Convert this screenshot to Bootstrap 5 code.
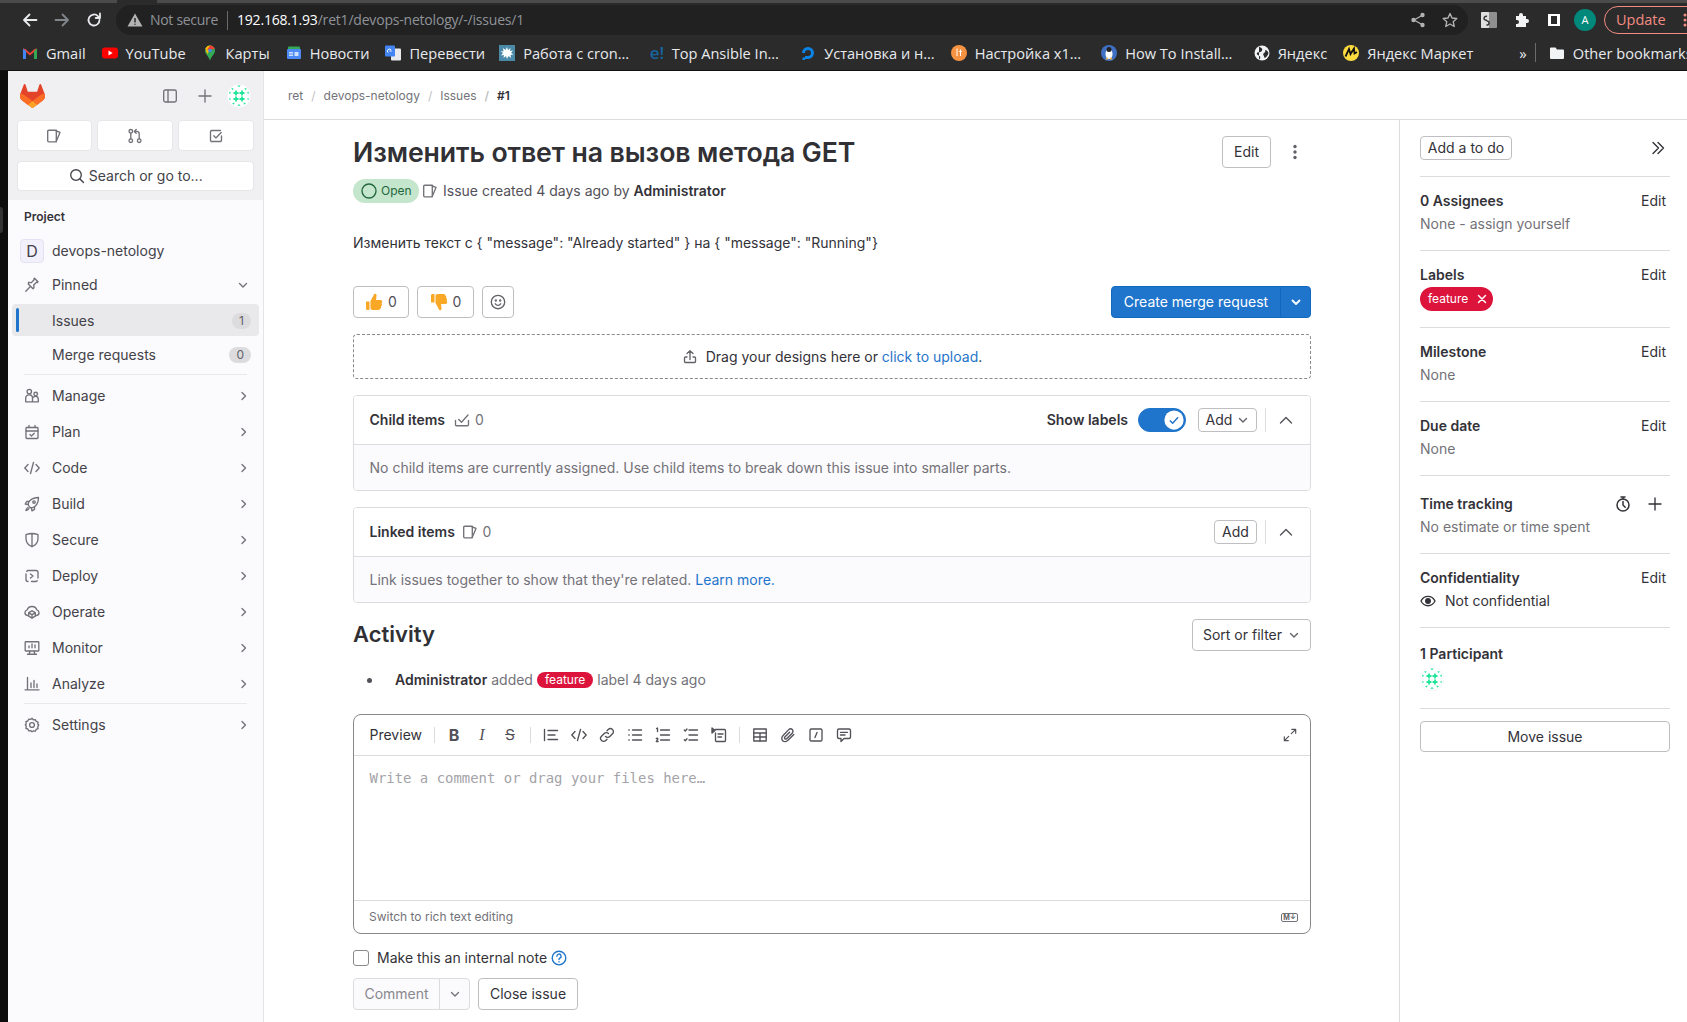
<!doctype html>
<html lang="en">
<head>
<meta charset="utf-8">
<title>Issue #1</title>
<link href="https://cdn.jsdelivr.net/npm/bootstrap@5.3.0/dist/css/bootstrap.min.css" rel="stylesheet">
<style>
html,body{height:1022px;overflow:hidden}
body{font-family:Inter,"Noto Sans",sans-serif;font-size:14px;line-height:20px;color:#333238;background:#fff}
.ic{width:16px;height:16px;fill:none;stroke:currentColor;stroke-width:1.35;stroke-linecap:round;stroke-linejoin:round;flex:none}
.fav{width:16px;height:16px;flex:none}
/* browser */
.br-top{height:71px;background:#2b2b2c;color:#e8eaed;font-family:"Open Sans","Noto Sans",sans-serif;border-bottom:1px solid #111}
.br-strip{height:3px;background:#4b4b4b}
.br-strip i{display:block;width:40px;height:3px;margin-left:117px;background:#2b2b2c}
.br-tools{height:34px;position:relative;padding-left:14px}
.br-btn{width:32px;justify-content:center;color:#e8eaed}
.omni{height:30px;width:1352px;margin-left:6px;background:#212122;border-radius:15px;padding-left:11px;font-size:14px}
.omni .warn{color:#b3b3b3}
.omni .ns{color:#8f9398;margin-left:7px;letter-spacing:-.3px}
.omni .sep{width:1px;height:19px;background:#6b6b6b;margin:0 9px}
.omni .host{color:#fff;letter-spacing:-.2px}
.omni .path{color:#8f9398;letter-spacing:-.2px}
.avatar-a{width:22px;height:22px;border-radius:50%;background:#00897b;color:#fff;font-size:11px;justify-content:center}
.upd{height:28px;width:120px;margin-left:8px;border:1px solid #f28b82;border-radius:14px;color:#f28b82;padding-left:11px;font-size:14.5px;flex:none;margin-right:-40px}
.bm-row{height:31px;padding-left:22px;font-size:14.6px;white-space:nowrap;color:#e8eaed;overflow:hidden}
.bm{gap:8px;margin-right:16px;flex:none}
.bm-f{width:150.5px;margin-right:0}
.bm-first{margin-left:-2px}
.bm-after{margin-left:2px}
.fav-e{width:14px;color:#1565a0;font-size:17px;line-height:16px;font-weight:600}
/* app */
.app{height:951px}
.edge{width:8px;background:#0d0d0d;flex:none;padding-top:136px}
.edge i{display:block;width:3px;height:26px;background:#333;border-radius:0 5px 5px 0}
.side{width:256px;flex:none;background:#fbfafd;border-right:1px solid #e4e4e7;color:#434248}
.side-top{height:129px;background:#f0f0f2;padding:13px 9px 0 8.5px}
.side-r1{height:24px;color:#737278}
.logo{width:25px;height:24px;margin-left:3px}
.side-tabs{gap:5px;margin-top:12px}
.side-tab{flex:1;height:31px;background:#fff;border:1px solid #e7e7ea;border-radius:4px;padding:0;color:#737278;font-size:14px}
.side-search{width:100%;height:30px;margin-top:10px;background:#fff;border:1px solid #e7e7ea;border-radius:4px;color:#434248;gap:4px;padding:0 0 1px 1px;font-size:14px}
.side-head{height:34px;padding-left:16px;font-size:12px;font-weight:600;color:#333238}
.s-item{height:36px;margin:0 4px;padding:0 12px;gap:12px;color:#434248;border-radius:4px;position:relative;text-decoration:none}
.s-item .ic{color:#737278}
.s-item .chev{margin-left:auto;width:12px;height:12px;margin-right:-3px;color:#737278}
.s-item .chev-d{margin-right:-2px}
.s-h34{height:34px}
.s-project{padding-left:8px;gap:8px}
.proj-box{width:24px;height:24px;background:#f1f0fb;border:1px solid #e3e2f2;border-radius:4px;justify-content:center;font-size:16px}
.s-sub{height:32px;padding-left:40px}
.s-act{background:#e9e9eb;margin-top:2px;padding-top:1px}
.s-act::before{content:"";position:absolute;left:4px;top:4px;bottom:4px;width:3px;border-radius:2px;background:#1f75cb}
.s-cnt{margin-left:auto;background:#dcdcde;color:#626168;font-weight:400;font-size:12px;line-height:1;padding:2px 7px;border-radius:8px;margin-right:-4px}
.s-rule{height:1px;background:#e9e9eb;margin:0 16px}
.rs-mid{margin-top:3px}
/* main */
.crumbs{height:49px;border-bottom:1px solid #dcdcde;padding:1px 0 0 24px;flex:none}
.crumbs .breadcrumb{font-size:12px;--bs-breadcrumb-margin-bottom:0;--bs-breadcrumb-divider-color:#bfbfc3;--bs-breadcrumb-item-active-color:#333238}
.crumbs a{color:#737278;text-decoration:none}
.crumbs .active{font-weight:600}
.col-main{width:1135px;flex:none;padding:16px 88px 0 89px}
.col-right{flex:1;border-left:1px solid #dcdcde;padding:0 17px 0 20px;height:902px}
.gbtn{--bs-btn-padding-y:0;--bs-btn-padding-x:12px;--bs-btn-font-size:14px;--bs-btn-line-height:20px;--bs-btn-color:#333238;--bs-btn-bg:#fff;--bs-btn-border-color:#bfbfc3;--bs-btn-border-radius:4px;--bs-btn-hover-bg:#fff;--bs-btn-hover-color:#333238;--bs-btn-hover-border-color:#bfbfc3;height:32px;display:inline-flex;align-items:center;justify-content:center;white-space:nowrap}
.gbtn-sm{--bs-btn-padding-x:7px;height:24px}
.issue-title{font-size:26.7px;line-height:32px;font-weight:600;margin:0;color:#303035;letter-spacing:-.1px}
.st-open{height:24px;width:66px;background:#c3e6cd;color:#24663b;border-radius:12px;font-size:12px;font-weight:400;padding:0 0 0 8px;gap:4px;line-height:1}
.meta{margin-top:11px;gap:6px;color:#535158}
.meta b{font-weight:600;color:#333238}
.descr{margin-top:30px;color:#333238}
.awards{margin-top:33px;gap:8px}
.cnt-txt{margin-left:5px;color:#535158}
.mr-btn{--bs-btn-color:#fff;--bs-btn-bg:#1f75cb;--bs-btn-border-color:#1068bf;--bs-btn-hover-bg:#1f75cb;--bs-btn-hover-color:#fff;--bs-btn-hover-border-color:#1068bf}
.dropzone{margin-top:16px;height:45px;border:1px dashed #89888d;border-radius:4px;gap:8px;color:#333238}
.dropzone a,.link-blue{color:#1f75cb;text-decoration:none}
.wcard{margin-top:16px;height:96px;--bs-card-border-color:#dcdcde;--bs-card-border-radius:4px;--bs-card-inner-border-radius:3px}
.wcard .card-header{height:49px;background:#fff;padding:0 8px 0 15.5px;border-bottom:1px solid #dcdcde;flex:none}
.wcard .card-body{background:#fbfafd;padding:13px 15.5px 12px;color:#737278;border-radius:0 0 3px 3px;flex:none}
.wc-title{font-weight:600}
.wc-count{color:#737278;gap:5px;margin-left:9px}
.vr-line{width:1px;height:24px;background:#dcdcde;margin:0 4px 0 8px}
.up-chev{width:32px;height:32px;color:#535158;padding:0;border:0;background:none;justify-content:center}
.sw-lab{font-weight:600;margin-right:10px}
.sw-wrap{padding:0;margin:0 12px 0 0;min-height:0;height:24px}
.form-switch .sw-input,.form-switch .sw-input:checked{width:48px;height:24px;margin:0;float:none;border-radius:12px;background-color:#1f75cb;border-color:#1f75cb;background-position:right center;background-size:auto 100%;background-image:url("data:image/svg+xml,%3Csvg xmlns='http://www.w3.org/2000/svg' viewBox='0 0 24 24'%3E%3Ccircle cx='12' cy='12' r='10.5' fill='%23fff'/%3E%3Cpath d='M7.5 12.5l3 3 6-6.500' fill='none' stroke='%231f75cb' stroke-width='1.6'/%3E%3C/svg%3E")}
.act-head{margin-top:16px;height:32px}
.act-title{font-size:22px;line-height:30px;padding-bottom:2px;font-weight:600;margin:0;color:#303035}
.act-row{margin-top:19px;color:#737278;padding-left:14px}
.act-row i{width:5px;height:5px;border-radius:50%;background:#535158;margin-right:23px}
.act-row b{font-weight:600;color:#333238;margin-right:4px}
.lab-in{background:#dc143c;color:#fff;font-size:12px;line-height:16px;height:16px;font-weight:400;padding:0 8px;border-radius:8px;margin:0 4px;display:inline-block}
.editor{margin-top:24px;height:220px;border:1px solid #89888d;border-radius:8px}
.ed-bar{height:41px;padding:0 11px 0 15.5px;border-bottom:1px solid #dcdcde}
.ed-bar .sepv{width:1px;height:16px;background:#dcdcde}
.ed-t{width:28px;height:28px;justify-content:center;color:#535158}
.ed-l{font-weight:700;font-size:16px;line-height:1}
.ed-i{font:italic 16px "Liberation Serif",serif}
.ed-s{font-size:15px}
.ed-area{flex:1;padding:12px 15.5px;font-family:"DejaVu Sans Mono",monospace;font-size:13.95px;color:#a4a3a8}
.ed-foot{height:33px;padding:0 11px 0 15px;border-top:1px solid #dcdcde;font-size:12px;color:#737278}
.md-ic{border:1px solid #737278;border-radius:2px;font-size:7px;line-height:7px;padding:0 1px;color:#626168;font-weight:700}
.note-row{margin-top:14px;height:20px;gap:8px}
.note-row .form-check-input{width:16px;height:16px;margin:0;border-radius:3px;border-color:#89888d}
.foot-btns{margin-top:10px;gap:8px}
.gbtn-dis{--bs-btn-color:#89888d;--bs-btn-bg:#fbfafd;--bs-btn-border-color:#dcdcde;--bs-btn-hover-bg:#fbfafd;--bs-btn-hover-color:#89888d;--bs-btn-hover-border-color:#dcdcde}
/* sidebar right */
.rs{border-bottom:1px solid #dcdcde;padding:14px 0 16px}
.rs-t{height:20px;font-weight:600;color:#333238}
.rs-t span.ed{font-weight:400;margin-left:auto;margin-right:4px;color:#333238}
.rs-v{margin-top:3px;height:20px;color:#737278}
.rs-top{padding:16px 0}
.lab-chip{height:24px;width:73px;margin-top:2px;padding:0 0 0 8px;background:#dc143c;color:#fff;border-radius:12px;font-size:12px;font-weight:400;gap:8px}
.rs-move{margin-top:12px;height:31px;width:100%}
.part-av{width:24px;height:24px;margin-top:3px;margin-bottom:1px}
</style>
</head>
<body>
<svg class="d-none" xmlns="http://www.w3.org/2000/svg">
 <symbol id="i-issue" viewBox="0 0 16 16"><path d="M1.700 3.200a1 1 0 0 1 1-1h7.600v11.600H2.700a1 1 0 0 1-1-1z"/><path d="M10.300 3l3.700 1.400-3.700 8.800"/></symbol>
 <symbol id="i-mr" viewBox="0 0 16 16"><circle cx="3.800" cy="3.300" r="1.800"/><circle cx="3.800" cy="12.700" r="1.800"/><circle cx="12.200" cy="12.700" r="1.800"/><path d="M3.800 5.100v5.800M12.200 10.900V6a2.600 2.600 0 0 0-2.600-2.600H7.500M9.200 1.500L7.300 3.400l1.900 1.900"/></symbol>
 <symbol id="i-todo" viewBox="0 0 16 16"><path d="M13.500 8v4.300a1.200 1.200 0 0 1-1.200 1.200H3.700a1.200 1.200 0 0 1-1.200-1.200V3.700a1.200 1.200 0 0 1 1.200-1.200h8.800"/><path d="M5.800 7.800l2.100 2.100 5.300-5.300"/></symbol>
 <symbol id="i-search" viewBox="0 0 16 16"><circle cx="7" cy="7" r="5.300"/><path d="M11 11l3.500 3.500"/></symbol>
 <symbol id="i-panel" viewBox="0 0 16 16"><rect x="1.700" y="2" width="12.600" height="12" rx="1.700"/><path d="M6 2v12"/></symbol>
 <symbol id="i-plus" viewBox="0 0 16 16"><path d="M8 2v12M2 8h12"/></symbol>
 <symbol id="i-chev-r" viewBox="0 0 12 12"><path d="M4 2.500L7.500 6 4 9.500"/></symbol>
 <symbol id="i-chev-d" viewBox="0 0 12 12"><path d="M2.500 4.500L6 8l3.500-3.500"/></symbol>
 <symbol id="i-chev-u" viewBox="0 0 16 16"><path d="M2.500 11L8 5.500l5.500 5.500"/></symbol>
 <symbol id="i-pin" viewBox="0 0 16 16"><path d="M1.800 14.200l4.100-4.100M4.300 7l4.700 4.700 1-1-.3-2.800 2.800-2.700.9.300.6-.7-3.500-3.500-.7.600.3.900-2.700 2.800-2.800-.3z"/></symbol>
 <symbol id="i-manage" viewBox="0 0 16 16"><circle cx="5.300" cy="3.600" r="2.200"/><circle cx="11.700" cy="6" r="1.800"/><path d="M1.700 13.800V10a3.200 3.200 0 0 1 3.200-3.200h.6A3 3 0 0 1 8.500 10v3.800zM8.500 13.800h5.800v-2.600a2.800 2.800 0 0 0-2.800-2.800 3 3 0 0 0-2.300 1"/></symbol>
 <symbol id="i-plan" viewBox="0 0 16 16"><rect x="2" y="3.500" width="12" height="11" rx=".8"/><path d="M2 7h12M5 1.500v2M11 1.500v2M6 10.500l1.500 1.500L10.200 9.300"/></symbol>
 <symbol id="i-code" viewBox="0 0 16 16"><path d="M4 4.500L.8 8 4 11.500M12 4.500L15.200 8 12 11.500M9.500 2.500l-3 11"/></symbol>
 <symbol id="i-build" viewBox="0 0 16 16"><path d="M5.500 11c-1-1-1.500-2.200-1.200-3.600C5 4 9.500 1.300 14.500 1.500c.2 5-2.500 9.500-5.900 10.200-1.400.3-2.300-.1-3.100-.7z"/><path d="M4.500 5.500H2.700L1.200 8l3 .7M10.500 11.500v1.800L8 14.800l-.7-3"/><circle cx="10" cy="6" r="1.200"/><path d="M4 11.500c-1 .5-1.700 1.500-2 3 1.500-.3 2.500-1 3-2"/></symbol>
 <symbol id="i-secure" viewBox="0 0 16 16"><path d="M8 14.700C4.500 13.300 2 10.700 2 6.500V2.700C3.800 2 5.800 1.500 8 1.500s4.200.5 6 1.200v3.800c0 4.200-2.500 6.800-6 8.200zM8 1.500v13.200"/></symbol>
 <symbol id="i-deploy" viewBox="0 0 16 16"><path d="M4 13.500A2 2 0 0 1 2 11.500V6M2.700 3.300A2 2 0 0 1 4 2.500h8a2 2 0 0 1 2 2v5.500M13.300 12.700a2 2 0 0 1-1.300.8H7.500"/><path d="M6.500 6l2.500 2-2.500 2"/></symbol>
 <symbol id="i-operate" viewBox="0 0 16 16"><path d="M4 11.500H3.500A2.800 2.800 0 0 1 1 8.500c0-1.400.9-2.300 2.200-2.600C3.800 3.700 5.700 2.500 8 2.500s4.200 1.200 4.800 3.400C14.100 6.200 15 7.100 15 8.500a2.800 2.800 0 0 1-2.500 3H12"/><path d="M8 6.800l3.300 1.900v3.500L8 14.200l-3.300-2V8.700zM4.700 8.800L8 10.700l3.300-1.900M8 10.700v3.500"/></symbol>
 <symbol id="i-monitor" viewBox="0 0 16 16"><rect x="1.200" y="1.700" width="13.600" height="9.300" rx=".6"/><path d="M5 7.800V6M8 7.800V4M11 7.800V5M6 11l-.8 3M10 11l.8 3M3.500 14.200h9"/></symbol>
 <symbol id="i-analyze" viewBox="0 0 16 16"><path d="M3.500 1.500v12.300M1 13.800h14M7 11.500V7M10 11.500V4.500M13 11.500V8"/></symbol>
 <symbol id="i-gear" viewBox="0 0 16 16"><path d="M8 1.300l1.300 1.500 2-.2.9 1.800 1.900.7-.4 2 1 1-1 1.700.4 1.900-1.900.7-.9 1.800-2-.2L8 14.700l-1.300-1.100-2 .2-.9-1.800-1.900-.7.4-1.900-1-1.700 1-1-.4-2 1.900-.7.9-1.800 2 .2z"/><circle cx="8" cy="8" r="2.400"/></symbol>
 <symbol id="i-upload" viewBox="0 0 16 16"><path d="M8 10.500V2M5 4.500L8 1.800l3 2.700M5 8H3.500a1 1 0 0 0-1 1v3.500a1 1 0 0 0 1 1h9a1 1 0 0 0 1-1V9a1 1 0 0 0-1-1H11"/></symbol>
 <symbol id="i-smile" viewBox="0 0 16 16"><circle cx="8" cy="8" r="6.700"/><circle cx="5.800" cy="6.500" r=".5"/><circle cx="10.200" cy="6.500" r=".5"/><path d="M5.300 9.800c.7 1 1.600 1.500 2.700 1.500s2-.5 2.700-1.500"/></symbol>
 <symbol id="i-child" viewBox="0 0 16 16"><path d="M1.500 8.500v4.200a1 1 0 0 0 1 1h11a1 1 0 0 0 1-1V8.500"/><path d="M4.700 7.500l2.800 2.800L14 3"/></symbol>
 <symbol id="i-expand" viewBox="0 0 16 16"><path d="M9.500 6.500L14.500 1.500M10 1.500h4.500V6M6.500 9.500l-5 5M6 14.500H1.500V10"/></symbol>
 <symbol id="i-dchev" viewBox="0 0 16 16"><path d="M3 2.500L8.500 8 3 13.500M8 2.500L13.500 8 8 13.500"/></symbol>
 <symbol id="i-quote" viewBox="0 0 16 16"><path d="M1.500 2.500v11M5 3.500h9.500M5 8h7M5 12.500h9.500"/></symbol>
 <symbol id="i-link" viewBox="0 0 16 16"><path d="M6.500 9.500a3 3 0 0 0 4.300 0l2.700-2.700a3 3 0 0 0-4.300-4.300L8 3.700M9.500 6.500a3 3 0 0 0-4.300 0L2.500 9.200a3 3 0 0 0 4.300 4.300L8 12.300"/></symbol>
 <symbol id="i-bul" viewBox="0 0 16 16"><path d="M5.500 3h9M5.500 8h9M5.500 13h9M1.800 3h.4M1.800 8h.4M1.800 13h.4"/></symbol>
 <symbol id="i-num" viewBox="0 0 16 16"><path d="M5.500 3h9M5.500 8h9M5.500 13h9M1.500 1.500l1-.5v3.500M1.300 11.500c.6-.6 1.700-.3 1.500.6L1.300 14.500h1.800"/></symbol>
 <symbol id="i-task" viewBox="0 0 16 16"><path d="M6 3h8.500M6 8h8.500M6 13h8.500M1.300 3l1 1 1.700-2M1.300 12.800l1 1 1.700-2"/></symbol>
 <symbol id="i-coll" viewBox="0 0 16 16"><path d="M4 2.500h9.500a1 1 0 0 1 1 1v10a1 1 0 0 1-1 1h-8a1 1 0 0 1-1-1V6M7 7h5M7 10h3.500"/><path d="M1 1l3 2.500L1 6z" fill="currentColor"/></symbol>
 <symbol id="i-table" viewBox="0 0 16 16"><rect x="1.800" y="2" width="12.400" height="12"/><path d="M1.800 6h12.400M1.800 10h12.400M8 6v8"/></symbol>
 <symbol id="i-clip" viewBox="0 0 16 16"><path d="M13.800 7.500L8 13.300c-1.600 1.600-4 1.700-5.300.4s-1.200-3.700.4-5.300l5.400-5.500c1.200-1.200 2.900-1.200 3.800-.3s.9 2.600-.3 3.800L6.900 11.500c-.6.600-1.500.7-2 .2s-.4-1.400.2-2l4.500-4.500"/></symbol>
 <symbol id="i-slash" viewBox="0 0 16 16"><rect x="2" y="2" width="12" height="12" rx="1.300"/><path d="M9 5.500L7 10.500"/></symbol>
 <symbol id="i-cmt" viewBox="0 0 16 16"><path d="M3 2h10a1.500 1.500 0 0 1 1.500 1.500v6.500A1.500 1.500 0 0 1 13 11.500H8l-3 3V11.500H3A1.500 1.500 0 0 1 1.500 10V3.500A1.500 1.500 0 0 1 3 2zM4.500 5.300h7M4.500 8h4.500"/></symbol>
 <symbol id="i-timer" viewBox="0 0 16 16"><circle cx="8" cy="9" r="6"/><path d="M6 1h4M8 1v2M8 5.500V9l2.200 2.200"/></symbol>
 <symbol id="i-eye" viewBox="0 0 16 16"><path d="M1 8c1.500-3 4-4.700 7-4.700S13.500 5 15 8c-1.500 3-4 4.700-7 4.700S2.500 11 1 8z"/><circle cx="8" cy="8" r="2.300" fill="currentColor"/></symbol>
 <symbol id="i-help" viewBox="0 0 16 16"><circle cx="8" cy="8" r="6.800"/><path d="M5.900 6.200A2.100 2.100 0 1 1 8.800 8.100C8.200 8.500 8 8.900 8 9.600M8 11.700v.2"/></symbol>
 <symbol id="i-x" viewBox="0 0 12 12"><path d="M2.500 2.500l7 7M9.500 2.500l-7 7"/></symbol>
 <symbol id="av" viewBox="0 0 24 24"><circle cx="12" cy="12" r="11.800" fill="#fff" stroke="#ececef" stroke-width=".4"/><g fill="#1fe59a"><path d="M6.500 8.100h1.600V6.500h1.800v1.600h1.600v1.800H9.900v1.600H8.100V9.900H6.500zM12.500 8.100h1.600V6.500h1.800v1.600h1.600v1.800h-1.600v1.600h-1.800V9.900h-1.600zM6.500 14.100h1.600v-1.600h1.800v1.600h1.600v1.800H9.900v1.600H8.100v-1.600H6.500zM12.500 14.100h1.600v-1.600h1.800v1.600h1.600v1.800h-1.600v1.600h-1.800v-1.600h-1.600z"/><path d="M10.300 1.500h3.400L12 3.300zM2.300 7.500l1.900 1.200-1.900 1.200zM21.700 7.500l-1.900 1.200 1.900 1.200zM4.300 4.100l2.400.5-1.400 1.600zM19.700 4.100l-2.400.5 1.400 1.600zM2.300 14l1.900 1-1.900 1zM21.700 14l-1.900 1 1.900 1zM5 19.300l2.500-.7-.5 2.200zM19 19.300l-2.500-.7.500 2.200zM10.300 21.800l1.700-1.700 1.700 1.700z"/></g></symbol>
 <symbol id="t-up" viewBox="0 0 18 18"><path d="M1 8.500h3.500V17H2.500A1.500 1.500 0 0 1 1 15.500zM5.500 8l3-5.500c.3-1 .6-1.700 1.500-1.700 1.200 0 1.800 1 1.500 2.500L11 7h4.500a1.800 1.800 0 0 1 .9 3.300 1.800 1.800 0 0 1-.5 3 1.700 1.700 0 0 1-.9 2.500c0 .7-.6 1.200-1.500 1.200H8c-1.500 0-2.500-.8-2.500-2z" fill="#f9a825"/></symbol>
</svg>

<header class="br-top">
  <div class="br-strip"><i></i></div>
  <div class="br-tools d-flex align-items-center">
    <span class="br-btn d-flex"><svg class="ic" style="stroke-width:1.8" viewBox="0 0 16 16"><path d="M14.500 8H2M7.500 2.500L2 8l5.500 5.500"/></svg></span>
    <span class="br-btn d-flex" style="color:#80868b"><svg class="ic" style="stroke-width:1.8" viewBox="0 0 16 16"><path d="M1.500 8H14M8.500 2.500L14 8l-5.500 5.500"/></svg></span>
    <span class="br-btn d-flex"><svg class="ic" style="stroke-width:1.8" viewBox="0 0 16 16"><path d="M13.500 8a5.500 5.500 0 1 1-1.600-3.900L14 6V1.500M14 6H9.700"/></svg></span>
    <div class="omni d-flex align-items-center">
      <svg class="warn fav" viewBox="0 0 16 16"><path d="M8 1.500L15.500 14.500H.5z" fill="currentColor"/><path d="M8 6v4.500M8 11.700v1" stroke="#212122" stroke-width="1.400"/></svg>
      <span class="ns">Not secure</span><span class="sep"></span><span class="host">192.168.1.93</span><span class="path">/ret1/devops-netology/-/issues/1</span>
      <span class="ms-auto d-flex align-items-center" style="gap:16px;padding-right:10px;color:#b3b3b3">
        <svg class="ic" viewBox="0 0 16 16"><circle cx="12.500" cy="3" r="1.500" fill="currentColor"/><circle cx="12.500" cy="13" r="1.500" fill="currentColor"/><circle cx="3.500" cy="8" r="1.500" fill="currentColor"/><path d="M12 3.500L4 8l8 4.500"/></svg>
        <svg class="ic" viewBox="0 0 16 16"><path d="M8 1.500l2 4.500 4.800.5-3.600 3.200 1 4.800L8 12l-4.200 2.500 1-4.800L1.200 6.500 6 6z"/></svg>
      </span>
    </div>
    <svg class="fav" style="margin-left:13px" viewBox="0 0 16 16"><rect width="16" height="16" rx="1" fill="#8f8f8f"/><rect width="8" height="16" rx="1" fill="#e0e0e0"/><path d="M6 4.500a2 2 0 1 0 0 3.500M5.500 9a2 2 0 1 1 0 3.800" fill="none" stroke="#333" stroke-width="1.500"/></svg>
    <svg class="fav" style="margin-left:16px" viewBox="0 0 16 16"><path d="M3 4h3V3a2 2 0 0 1 4 0v1h3v3h1a2 2 0 0 1 0 4h-1v4H3v-3h1a2 2 0 0 0 0-4H3z" fill="#f1f3f4"/></svg>
    <svg class="fav" style="margin-left:17px" viewBox="0 0 16 16"><path d="M2 2h12v12H2z" fill="#fff"/><path d="M5 4h6v8H5z" fill="#2b2b2c"/></svg>
    <span class="avatar-a d-flex align-items-center" style="margin-left:12px">A</span>
    <span class="upd d-flex align-items-center">Update<svg style="width:4px;height:14px;margin-left:17px" viewBox="0 0 4 14"><g fill="#f28b82"><circle cx="2" cy="2" r="1.500"/><circle cx="2" cy="7" r="1.500"/><circle cx="2" cy="12" r="1.500"/></g></svg></span>
  </div>
  <div class="bm-row d-flex align-items-center">
    <span class="bm d-flex align-items-center"><svg class="fav" viewBox="0 0 16 16"><path d="M1 14V3.500L3.500 4 8 8l4.500-4 2.500-.500V14h-3V7L8 10.500 4 7v7z" fill="#ea4335"/><path d="M1 14V3.500l3 2.500v8z" fill="#4285f4"/><path d="M12 14V6l3-2.500V14z" fill="#34a853"/></svg>Gmail</span>
    <span class="bm d-flex align-items-center"><svg class="fav" viewBox="0 0 16 16"><rect y="2.500" width="16" height="11" rx="3" fill="#f00"/><path d="M6.500 5.500l4.200 2.500-4.200 2.500z" fill="#fff"/></svg>YouTube</span>
    <span class="bm d-flex align-items-center"><svg class="fav" viewBox="0 0 16 16"><path d="M8 .5a5 5 0 0 1 5 5c0 3.500-3.500 5.500-5 10-1.500-4.500-5-6.500-5-10a5 5 0 0 1 5-5z" fill="#34a853"/><path d="M3.500 3.500A5 5 0 0 1 8 .5l3 1.500L5 9z" fill="#fbbc04"/><path d="M8 .5a5 5 0 0 1 4.800 3.500L5 5z" fill="#ea4335"/><circle cx="8" cy="5.500" r="1.800" fill="#4285f4"/></svg>Карты</span>
    <span class="bm d-flex align-items-center"><svg class="fav" viewBox="0 0 16 16"><rect x="2" y="1.500" width="12" height="6" rx="1" fill="#34a853"/><rect x="1" y="4" width="14" height="10" rx="1" fill="#4c8bf5"/><rect x="8.500" y="7" width="4" height="4" fill="#cfe0fc"/><rect x="3" y="7" width="4" height="1.500" fill="#cfe0fc"/><rect x="3" y="9.500" width="4" height="1.500" fill="#cfe0fc"/></svg>Новости</span>
    <span class="bm d-flex align-items-center"><svg class="fav" viewBox="0 0 16 16"><rect x="6" y="3.500" width="10" height="12" rx="1" fill="#e8eaed"/><rect y=".5" width="10" height="11" rx="1" fill="#4285f4"/><path d="M3 7.500a2 2 0 1 1 3.200-2.300M4.500 6h2" stroke="#fff" fill="none" stroke-width="1"/></svg>Перевести</span>
    <span class="bm bm-f bm-first d-flex align-items-center"><svg class="fav" viewBox="0 0 16 16"><rect width="16" height="16" fill="#4a89a8"/><path d="M8 2l1 3 2.500-2-.5 3 3-.5L12 8l2.500 1.500-3 .5.500 3-2.500-2L8 14l-1-3-2.500 2 .5-3-3 .5L4 8 1.500 6l3 .5L4 3l2.500 2z" fill="#fff"/></svg>Работа с cron…</span>
    <span class="bm bm-f d-flex align-items-center"><span class="fav fav-e">e!</span>Top Ansible In…</span>
    <span class="bm bm-f d-flex align-items-center"><svg class="fav" viewBox="0 0 16 16"><path d="M8 14a6 6 0 1 0-6-6h3a3 3 0 1 1 3 3z" fill="#0b84e8"/><path d="M5 11h3v3H5zM2.500 12.500H5V15H2.500z" fill="#0b84e8"/></svg>Установка и н…</span>
    <span class="bm bm-f d-flex align-items-center"><svg class="fav" viewBox="0 0 16 16"><circle cx="8" cy="8" r="8" fill="#f59342"/><path d="M6 3.500V11M9.500 4.500V11M8 6.500h3" stroke="#fff" fill="none"/></svg>Настройка x1…</span>
    <span class="bm bm-f d-flex align-items-center"><svg class="fav" viewBox="0 0 16 16"><circle cx="8" cy="8" r="8" fill="#3f70c4"/><ellipse cx="8" cy="9" rx="3.500" ry="5" fill="#fff"/><circle cx="8" cy="4.500" r="2.500" fill="#222"/><path d="M4.500 14.500h3L6 12zM8.500 14.500h3L10 12z" fill="#f5b83d"/></svg>How To Install…</span>
    <span class="bm bm-after d-flex align-items-center"><svg class="fav" viewBox="0 0 16 16"><circle cx="8" cy="8" r="7.500" fill="#f1f3f4"/><path d="M5 1.500C7 3 9 3 8 5.500S4 6.500 3 8s2 2.500 3 3.500-.5 3-1 3zM11 5c2 0 3 1.500 3.500 3-.5 2-2.500 5-4 5 0-2-2-3-1-4.500s2.500-1 1.500-3.500z" fill="#2b2b2c"/></svg>Яндекс</span>
    <span class="bm d-flex align-items-center"><svg class="fav" viewBox="0 0 16 16"><circle cx="8" cy="8" r="8" fill="#fddc3f"/><path d="M2.500 11.500L6 4l1.500 5L11 3.500l.5 5 2.500-1.500" stroke="#111" stroke-width="1.800" fill="none"/></svg>Яндекс Маркет</span>
    <span style="margin-left:30px;font-size:15px">»</span>
    <span style="width:1px;height:19px;background:#6b6b6b;margin:0 13px 0 8px;flex:none"></span>
    <span class="bm d-flex align-items-center"><svg class="fav" viewBox="0 0 16 16"><path d="M1 3.500a1 1 0 0 1 1-1h4.500l1.500 2h6a1 1 0 0 1 1 1V13a1 1 0 0 1-1 1H2a1 1 0 0 1-1-1z" fill="#f1f3f4"/></svg>Other bookmarks</span>
  </div>
</header>

<div class="app d-flex">
  <div class="edge"><i></i></div>
  <aside class="side d-flex flex-column">
    <div class="side-top">
      <div class="side-r1 d-flex align-items-center">
        <svg class="logo" viewBox="0 0 25 24"><path d="m24.507 9.500-.034-.090L21.082.562a.896.896 0 0 0-1.694.091l-2.290 7.010H7.825L5.535.653a.898.898 0 0 0-1.694-.090L.451 9.411.416 9.500a6.297 6.297 0 0 0 2.090 7.278l.012.010.030.022 5.160 3.867 2.560 1.935 1.554 1.176a1.051 1.051 0 0 0 1.268 0l1.555-1.176 2.560-1.935 5.197-3.890.014-.010A6.297 6.297 0 0 0 24.507 9.500Z" fill="#E24329"/><path d="m24.507 9.500-.034-.090a11.440 11.440 0 0 0-4.560 2.051l-7.447 5.632 4.742 3.584 5.197-3.890.014-.010A6.297 6.297 0 0 0 24.507 9.500Z" fill="#FC6D26"/><path d="m7.707 20.677 2.560 1.935 1.555 1.176a1.051 1.051 0 0 0 1.268 0l1.555-1.176 2.560-1.935-4.743-3.584-4.755 3.584Z" fill="#FCA326"/><path d="M5.010 11.461a11.430 11.430 0 0 0-4.560-2.050L.416 9.500a6.297 6.297 0 0 0 2.090 7.278l.012.010.030.022 5.160 3.867 4.745-3.584-7.444-5.632Z" fill="#FC6D26"/></svg>
        <svg class="ic ms-auto"><use href="#i-panel"/></svg>
        <svg class="ic" style="margin-left:19px"><use href="#i-plus"/></svg>
        <svg style="width:24px;height:24px;margin-left:14px;margin-right:3px"><use href="#av"/></svg>
      </div>
      <div class="side-tabs d-flex">
        <button class="side-tab btn d-flex align-items-center justify-content-center"><svg class="ic"><use href="#i-issue"/></svg></button>
        <button class="side-tab btn d-flex align-items-center justify-content-center"><svg class="ic"><use href="#i-mr"/></svg></button>
        <button class="side-tab btn d-flex align-items-center justify-content-center"><svg class="ic"><use href="#i-todo"/></svg></button>
      </div>
      <button class="side-search btn d-flex align-items-center justify-content-center"><svg class="ic"><use href="#i-search"/></svg>Search or go to...</button>
    </div>
    <div class="side-head d-flex align-items-center">Project</div>
    <a class="s-item s-h34 s-project d-flex align-items-center"><span class="proj-box d-flex align-items-center">D</span>devops-netology</a>
    <a class="s-item s-h34 d-flex align-items-center"><svg class="ic"><use href="#i-pin"/></svg>Pinned<svg class="ic chev chev-d"><use href="#i-chev-d"/></svg></a>
    <a class="s-item s-sub s-act d-flex align-items-center">Issues<span class="badge s-cnt">1</span></a>
    <a class="s-item s-sub d-flex align-items-center rs-mid">Merge requests<span class="badge s-cnt">0</span></a>
    <div class="s-rule" style="margin-top:3px;margin-bottom:3px"></div>
    <a class="s-item d-flex align-items-center"><svg class="ic"><use href="#i-manage"/></svg>Manage<svg class="ic chev"><use href="#i-chev-r"/></svg></a>
    <a class="s-item d-flex align-items-center"><svg class="ic"><use href="#i-plan"/></svg>Plan<svg class="ic chev"><use href="#i-chev-r"/></svg></a>
    <a class="s-item d-flex align-items-center"><svg class="ic"><use href="#i-code"/></svg>Code<svg class="ic chev"><use href="#i-chev-r"/></svg></a>
    <a class="s-item d-flex align-items-center"><svg class="ic"><use href="#i-build"/></svg>Build<svg class="ic chev"><use href="#i-chev-r"/></svg></a>
    <a class="s-item d-flex align-items-center"><svg class="ic"><use href="#i-secure"/></svg>Secure<svg class="ic chev"><use href="#i-chev-r"/></svg></a>
    <a class="s-item d-flex align-items-center"><svg class="ic"><use href="#i-deploy"/></svg>Deploy<svg class="ic chev"><use href="#i-chev-r"/></svg></a>
    <a class="s-item d-flex align-items-center"><svg class="ic"><use href="#i-operate"/></svg>Operate<svg class="ic chev"><use href="#i-chev-r"/></svg></a>
    <a class="s-item d-flex align-items-center"><svg class="ic"><use href="#i-monitor"/></svg>Monitor<svg class="ic chev"><use href="#i-chev-r"/></svg></a>
    <a class="s-item d-flex align-items-center"><svg class="ic"><use href="#i-analyze"/></svg>Analyze<svg class="ic chev"><use href="#i-chev-r"/></svg></a>
    <div class="s-rule" style="margin-top:1px;margin-bottom:3px"></div>
    <a class="s-item d-flex align-items-center"><svg class="ic"><use href="#i-gear"/></svg>Settings<svg class="ic chev"><use href="#i-chev-r"/></svg></a>
  </aside>

  <div class="flex-grow-1 d-flex flex-column" style="min-width:0">
    <nav class="crumbs d-flex align-items-center">
      <ol class="breadcrumb">
        <li class="breadcrumb-item"><a href="#">ret</a></li>
        <li class="breadcrumb-item"><a href="#">devops-netology</a></li>
        <li class="breadcrumb-item"><a href="#">Issues</a></li>
        <li class="breadcrumb-item active">#1</li>
      </ol>
    </nav>
    <div class="d-flex flex-grow-1">
      <main class="col-main">
        <div class="d-flex align-items-center">
          <h1 class="issue-title">Изменить ответ на вызов метода GET</h1>
          <button class="btn gbtn ms-auto" style="width:49px">Edit</button>
          <svg style="width:4px;height:16px;margin-left:22px;margin-right:14px;color:#626168" viewBox="0 0 4 16"><g fill="currentColor"><circle cx="2" cy="2.500" r="1.700"/><circle cx="2" cy="8" r="1.700"/><circle cx="2" cy="13.500" r="1.700"/></g></svg>
        </div>
        <div class="meta d-flex align-items-center">
          <span class="badge st-open d-inline-flex align-items-center"><svg class="ic" viewBox="0 0 16 16"><circle cx="8" cy="8" r="7"/></svg>Open</span>
          <svg class="ic" style="color:#737278;margin-left:-3px"><use href="#i-issue"/></svg>
          <span style="margin-left:-1px">Issue created 4 days ago by <b>Administrator</b></span>
        </div>
        <p class="descr mb-0">Изменить текст с { "message": "Already started" } на { "message": "Running"}</p>
        <div class="awards d-flex">
          <button class="btn gbtn" style="width:56px;--bs-btn-padding-x:0"><svg width="18" height="18"><use href="#t-up"/></svg><span class="cnt-txt">0</span></button>
          <button class="btn gbtn" style="width:57px;--bs-btn-padding-x:0"><svg width="18" height="18" style="transform:rotate(180deg) scaleX(-1)"><use href="#t-up"/></svg><span class="cnt-txt">0</span></button>
          <button class="btn gbtn" style="width:32px;--bs-btn-padding-x:0;color:#626168"><svg class="ic"><use href="#i-smile"/></svg></button>
          <div class="btn-group ms-auto">
            <button class="btn gbtn mr-btn" style="width:170px;--bs-btn-padding-x:0">Create merge request</button>
            <button class="btn gbtn mr-btn" style="width:31px;--bs-btn-padding-x:0"><svg class="ic" style="width:12px;height:12px;stroke-width:1.800"><use href="#i-chev-d"/></svg></button>
          </div>
        </div>
        <div class="dropzone d-flex align-items-center justify-content-center"><svg class="ic" style="color:#626168"><use href="#i-upload"/></svg><span>Drag your designs here or <a href="#">click to upload</a>.</span></div>

        <div class="card wcard">
          <div class="card-header d-flex align-items-center">
            <span class="wc-title">Child items</span>
            <span class="wc-count d-flex align-items-center"><svg class="ic"><use href="#i-child"/></svg>0</span>
            <span class="sw-lab ms-auto">Show labels</span>
            <div class="form-check form-switch sw-wrap"><input class="form-check-input sw-input" type="checkbox" role="switch" checked aria-label="Show labels"></div>
            <button class="btn gbtn gbtn-sm" style="--bs-btn-padding-x:0;width:59px;gap:5px">Add<svg class="ic" style="width:12px;height:12px;color:#626168"><use href="#i-chev-d"/></svg></button>
            <span class="vr-line"></span>
            <button class="up-chev d-flex align-items-center"><svg class="ic"><use href="#i-chev-u"/></svg></button>
          </div>
          <div class="card-body">No child items are currently assigned. Use child items to break down this issue into smaller parts.</div>
        </div>

        <div class="card wcard">
          <div class="card-header d-flex align-items-center">
            <span class="wc-title">Linked items</span>
            <span class="wc-count d-flex align-items-center" style="gap:4px;margin-left:7.5px"><svg class="ic"><use href="#i-issue"/></svg>0</span>
            <button class="btn gbtn gbtn-sm ms-auto" style="--bs-btn-padding-x:0;width:43px">Add</button>
            <span class="vr-line"></span>
            <button class="up-chev d-flex align-items-center"><svg class="ic"><use href="#i-chev-u"/></svg></button>
          </div>
          <div class="card-body">Link issues together to show that they're related. <a class="link-blue" href="#">Learn more.</a></div>
        </div>

        <div class="act-head d-flex align-items-center">
          <h2 class="act-title">Activity</h2>
          <button class="btn gbtn ms-auto" style="width:119px;--bs-btn-padding-x:0;gap:6px">Sort or filter<svg class="ic" style="width:12px;height:12px;color:#626168"><use href="#i-chev-d"/></svg></button>
        </div>
        <div class="act-row d-flex align-items-center"><i></i><b>Administrator</b> added <span class="lab-in">feature</span> label 4 days ago</div>

        <div class="editor d-flex flex-column">
          <div class="ed-bar d-flex align-items-center">
            <span style="margin-right:12px">Preview</span><span class="sepv" style="margin-right:5px"></span>
            <span class="ed-t d-flex align-items-center ed-l">B</span>
            <span class="ed-t d-flex align-items-center ed-i">I</span>
            <span class="ed-t d-flex align-items-center ed-s text-decoration-line-through">S</span>
            <span class="sepv" style="margin:0 6px 0 6px"></span>
            <span class="ed-t d-flex align-items-center"><svg class="ic"><use href="#i-quote"/></svg></span>
            <span class="ed-t d-flex align-items-center"><svg class="ic"><use href="#i-code"/></svg></span>
            <span class="ed-t d-flex align-items-center"><svg class="ic"><use href="#i-link"/></svg></span>
            <span class="ed-t d-flex align-items-center"><svg class="ic"><use href="#i-bul"/></svg></span>
            <span class="ed-t d-flex align-items-center"><svg class="ic"><use href="#i-num"/></svg></span>
            <span class="ed-t d-flex align-items-center"><svg class="ic"><use href="#i-task"/></svg></span>
            <span class="ed-t d-flex align-items-center"><svg class="ic"><use href="#i-coll"/></svg></span>
            <span class="sepv" style="margin:0 6px 0 6px"></span>
            <span class="ed-t d-flex align-items-center"><svg class="ic"><use href="#i-table"/></svg></span>
            <span class="ed-t d-flex align-items-center"><svg class="ic"><use href="#i-clip"/></svg></span>
            <span class="ed-t d-flex align-items-center"><svg class="ic"><use href="#i-slash"/></svg></span>
            <span class="ed-t d-flex align-items-center"><svg class="ic"><use href="#i-cmt"/></svg></span>
            <svg class="ic ms-auto" style="color:#535158;margin-right:2px;width:14px;height:14px"><use href="#i-expand"/></svg>
          </div>
          <div class="ed-area">Write a comment or drag your files here…</div>
          <div class="ed-foot d-flex align-items-center">Switch to rich text editing<span class="md-ic ms-auto" style="margin-right:1px">M↓</span></div>
        </div>

        <div class="note-row d-flex align-items-center">
          <input class="form-check-input" type="checkbox" aria-label="Make this an internal note"><span>Make this an internal note</span>
          <svg class="ic" style="color:#1f75cb;margin-left:-4px"><use href="#i-help"/></svg>
        </div>
        <div class="foot-btns d-flex">
          <div class="btn-group">
            <button class="btn gbtn gbtn-dis" style="width:87px;--bs-btn-padding-x:0">Comment</button>
            <button class="btn gbtn gbtn-dis" style="width:31px;--bs-btn-padding-x:0"><svg class="ic" style="width:12px;height:12px;color:#737278"><use href="#i-chev-d"/></svg></button>
          </div>
          <button class="btn gbtn" style="width:100px;--bs-btn-padding-x:0">Close issue</button>
        </div>
      </main>

      <aside class="col-right">
        <div class="rs rs-top d-flex align-items-center">
          <button class="btn gbtn gbtn-sm" style="width:92px;--bs-btn-padding-x:0">Add a to do</button>
          <svg class="ic ms-auto" style="margin-right:4px"><use href="#i-dchev"/></svg>
        </div>
        <section class="rs">
          <div class="rs-t d-flex">0 Assignees<span class="ed">Edit</span></div>
          <div class="rs-v">None - assign yourself</div>
        </section>
        <section class="rs">
          <div class="rs-t d-flex">Labels<span class="ed">Edit</span></div>
          <span class="badge lab-chip d-flex align-items-center">feature<svg class="ic" style="width:12px;height:12px;stroke-width:1.500"><use href="#i-x"/></svg></span>
        </section>
        <section class="rs">
          <div class="rs-t d-flex">Milestone<span class="ed">Edit</span></div>
          <div class="rs-v">None</div>
        </section>
        <section class="rs">
          <div class="rs-t d-flex">Due date<span class="ed">Edit</span></div>
          <div class="rs-v">None</div>
        </section>
        <section class="rs" style="padding-top:18px">
          <div class="rs-t d-flex align-items-center">Time tracking<svg class="ic ms-auto" style="stroke-width:1.500"><use href="#i-timer"/></svg><svg class="ic" style="margin-left:16px;margin-right:7px"><use href="#i-plus"/></svg></div>
          <div class="rs-v">No estimate or time spent</div>
        </section>
        <section class="rs">
          <div class="rs-t d-flex">Confidentiality<span class="ed">Edit</span></div>
          <div class="rs-v d-flex align-items-center" style="color:#333238;gap:9px"><svg class="ic"><use href="#i-eye"/></svg>Not confidential</div>
        </section>
        <section class="rs" style="padding-top:16px">
          <div class="rs-t">1 Participant</div>
          <svg class="d-block part-av"><use href="#av"/></svg>
        </section>
        <button class="btn gbtn rs-move">Move issue</button>
      </aside>
    </div>
  </div>
</div>
<script src="https://cdn.jsdelivr.net/npm/bootstrap@5.3.0/dist/js/bootstrap.bundle.min.js"></script>
</body>
</html>
